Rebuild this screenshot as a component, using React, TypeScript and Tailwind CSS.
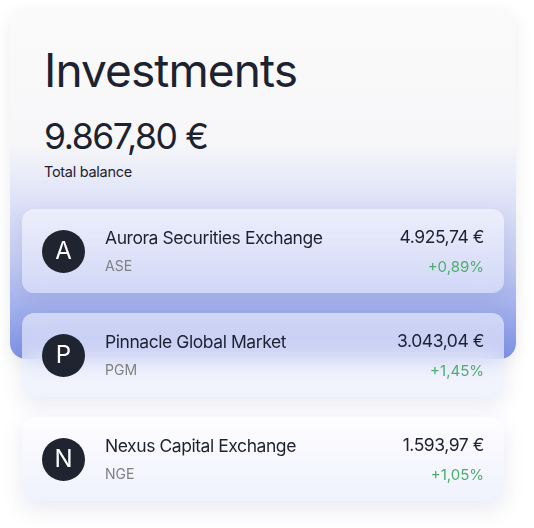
import React from "react";

type Holding = {
  letter: string;
  name: string;
  code: string;
  amount: string;
  change: string;
};

const holdings: Holding[] = [
  { letter: "A", name: "Aurora Securities Exchange", code: "ASE", amount: "4.925,74 €", change: "+0,89%" },
  { letter: "P", name: "Pinnacle Global Market", code: "PGM", amount: "3.043,04 €", change: "+1,45%" },
  { letter: "N", name: "Nexus Capital Exchange", code: "NGE", amount: "1.593,97 €", change: "+1,05%" },
];

const HoldingCard: React.FC<{ item: Holding }> = ({ item }) => (
  <div className="flex items-center gap-5 h-[84px] px-5 rounded-xl backdrop-blur-md bg-[linear-gradient(180deg,rgba(252,252,255,0.55),rgba(230,233,251,0.6))] shadow-[0_8px_22px_rgba(70,80,140,0.12)]">
    <div className="w-[43px] h-[43px] shrink-0 rounded-full bg-[#1f2430] flex items-center justify-center text-white text-[24px] leading-none">
      {item.letter}
    </div>
    <div className="flex-1 flex flex-col gap-[13px]">
      <span className="text-[17.5px] leading-none text-[#1d2230] tracking-[-0.025em]">{item.name}</span>
      <span className="text-[14px] leading-none text-[#808080]">{item.code}</span>
    </div>
    <div className="flex flex-col items-end gap-[13px]">
      <span className="text-[17.5px] leading-none text-[#1d2230] tracking-[-0.025em]">{item.amount}</span>
      <span className="text-[15px] leading-none text-[#4cad6d]">{item.change}</span>
    </div>
  </div>
);

export default function App() {
  return (
    <div className="min-h-screen bg-white pt-[10px] pl-[10px] font-['Inter',sans-serif]">
      <div className="w-[506px] h-[349px] rounded-2xl px-3 pt-[37px] bg-[linear-gradient(180deg,#fafafa_0%,#f7f7f9_38%,#dfe3f7_54%,#c4ccf3_72%,#7e92e6_100%)] shadow-[0_4px_18px_rgba(0,0,0,0.08)]">
        <div className="px-[22px] text-[#1d2230]">
          <h1 className="text-[46px] leading-none tracking-[-0.02em]">Investments</h1>
          <div className="mt-[26px] text-[35.5px] leading-none tracking-[-0.04em]">9.867,80 €</div>
          <div className="mt-[10px] text-[14.5px] leading-none tracking-[-0.02em]">Total balance</div>
        </div>
        <div className="mt-[30px] flex flex-col gap-5">
          {holdings.map((h) => (
            <HoldingCard key={h.code} item={h} />
          ))}
        </div>
      </div>
    </div>
  );
}
